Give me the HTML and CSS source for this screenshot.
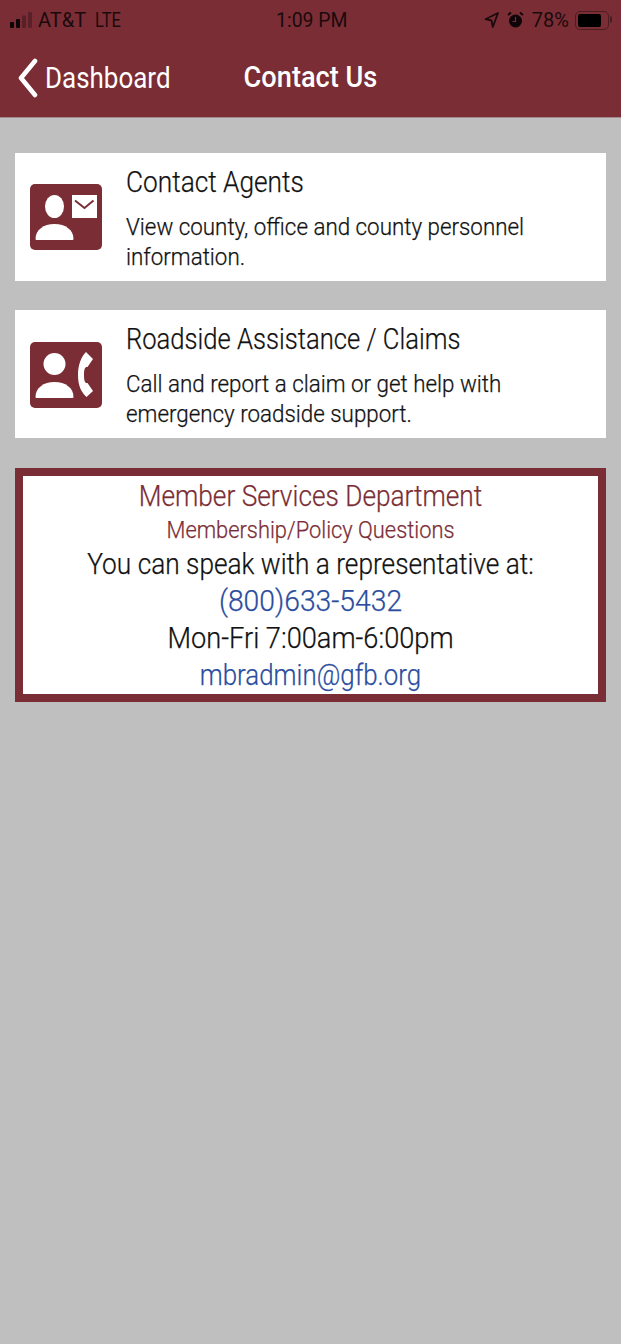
FILE: index.html
```html
<!DOCTYPE html>
<html lang="en">
<head>
<meta charset="utf-8">
<title>Contact Us</title>
<link rel="stylesheet" href="styles.css">
</head>
<body>
<header class="header">
  <div class="status">
    <div class="status-left">
      <svg class="signal" width="24" height="16" viewBox="0 0 24 16"><rect x="1" y="10" width="4" height="6" rx="1" fill="#0d0507"/><rect x="7" y="7" width="4" height="9" rx="1" fill="#0d0507"/><rect x="13" y="3.500" width="4" height="12.500" rx="1" fill="#5a2028"/><rect x="19" y="0" width="4" height="16" rx="1" fill="#5a2028"/></svg>
      <span class="carrier">AT&amp;T</span><span class="lte">LTE</span>
    </div>
    <div class="time">1:09 PM</div>
    <div class="status-right">
      <svg class="arrow" width="15" height="16" viewBox="0 0 15 16"><path d="M14 1 1.500 7.200 7.500 8.500 8.800 15Z" fill="none" stroke="#1a0a0c" stroke-width="1.800" stroke-linejoin="round"/></svg>
      <svg width="17" height="18" viewBox="0 0 17 18"><circle cx="8.500" cy="10" r="6.500" fill="#0d0507"/><path d="M8.500 6v4.500H5.500" fill="none" stroke="#7b2d35" stroke-width="1.200"/><path d="M1 4 4 1.500M16 4l-3-2.500" stroke="#0d0507" stroke-width="1.800"/></svg>
      <span class="pct">78%</span>
      <div class="battery"><div class="battery-fill"></div></div>
    </div>
  </div>
  <nav class="nav">
    <a class="back">
      <svg width="20" height="40" viewBox="0 0 20 40"><path d="M17 3 3 20l14 17" fill="none" stroke="#fff" stroke-width="4.600" stroke-linecap="round" stroke-linejoin="round"/></svg>
      <span class="back-label">Dashboard</span>
    </a>
    <h1 class="title">Contact Us</h1>
  </nav>
</header>
<main class="content">
  <section class="card">
    <svg class="icon" width="72" height="66" viewBox="0 0 72 66">
      <rect width="72" height="66" rx="5" fill="#7b2d35"/>
      <ellipse cx="24.500" cy="22.500" rx="9.500" ry="11.500" fill="#fff"/>
      <path d="M5.500 55c0-9 8-15 19-15s19 6 19 15a1 1 0 0 1-1 1H6.500a1 1 0 0 1-1-1Z" fill="#fff"/>
      <rect x="42" y="11" width="25" height="23" fill="#fff"/>
      <path d="M45 16.500 54.500 24l9-7.500" fill="none" stroke="#7b2d35" stroke-width="2"/>
    </svg>
    <div class="card-text">
      <h2 class="card-title">Contact Agents</h2>
      <p class="card-desc">View county, office and county personnel<br>information.</p>
    </div>
  </section>
  <section class="card">
    <svg class="icon icon-low" width="72" height="66" viewBox="0 0 72 66">
      <rect width="72" height="66" rx="5" fill="#7b2d35"/>
      <circle cx="24.500" cy="22" r="11" fill="#fff"/>
      <path d="M5.500 55c0-9 8-15 19-15s19 6 19 15a1 1 0 0 1-1 1H6.500a1 1 0 0 1-1-1Z" fill="#fff"/>
      <path d="M56 10 63 17 57.500 25C55 24.500 54 27 54 33 54 39 55 41.500 57.500 41L63 49 56.500 55C51 50 48 43 48 33 48 23 51 15 56 10Z" fill="#fff"/>
    </svg>
    <div class="card-text">
      <h2 class="card-title narrow">Roadside Assistance / Claims</h2>
      <p class="card-desc">Call and report a claim or get help with<br>emergency roadside support.</p>
    </div>
  </section>
  <section class="member">
    <h2 class="member-title">Member Services Department</h2>
    <h3 class="member-sub">Membership/Policy Questions</h3>
    <p class="member-line speak">You can speak with a representative at:</p>
    <a class="member-line link phone">(800)633-5432</a>
    <p class="member-line hours">Mon-Fri 7:00am-6:00pm</p>
    <a class="member-line link email">mbradmin@gfb.org</a>
  </section>
</main>
</body>
</html>
```
FILE: styles.css
```css
* { box-sizing: border-box; margin: 0; padding: 0; }
html, body { height: 100%; }
body {
  width: 621px;
  height: 1344px;
  overflow: hidden;
  background: #bfbfbf;
  font-family: Roboto, "Liberation Sans", sans-serif;
  font-weight: 300;
  color: #111;
}
.header {
  height: 118px;
  background: #7b2d35;
  border-bottom: 1px solid #a58a8d;
}
.status {
  height: 40px;
  padding: 0 12px 0 9px;
  display: grid;
  grid-template-columns: 1fr auto 1fr;
  align-items: center;
  color: #1a0a0c;
  font-size: 20px;
  font-weight: 400;
}
.status-left { display: flex; align-items: center; gap: 5px; }
.lte { margin-left: 4px; transform: scaleX(.82); transform-origin: left center; }
.time { transform: translateX(3px) scaleX(.97); }
.status-right { display: flex; align-items: center; justify-content: flex-end; gap: 6px; }
.arrow { margin-right: 2px; }
.pct { margin-left: 2px; }
.battery {
  position: relative;
  width: 34px;
  height: 19px;
  border: 1.500px solid #4c1c22;
  border-radius: 5px;
  padding: 2px;
}
.battery::after {
  content: "";
  position: absolute;
  right: -4px;
  top: 4px;
  width: 2px;
  height: 7px;
  background: #4c1c22;
  border-radius: 0 2px 2px 0;
}
.battery-fill { width: 82%; height: 100%; background: #000; border-radius: 2px; }
.nav {
  height: 77px;
  position: relative;
  display: flex;
  align-items: center;
  padding: 0 0 2px 18px;
  color: #fff;
}
.back { display: flex; align-items: center; gap: 7px; font-size: 29px; font-weight: 400; }
.back-label { transform: scaleX(.895); transform-origin: left center; }
.title {
  position: absolute;
  left: 0;
  right: 0;
  top: 20px;
  text-align: center;
  font-size: 29px;
  font-weight: 500;
  transform: scaleX(.937);
}
.content {
  padding: 35px 15px 0;
  display: flex;
  flex-direction: column;
  gap: 29px;
}
.card {
  height: 128px;
  background: #fff;
  display: flex;
  align-items: center;
  padding: 0 15px;
  gap: 24px;
}
.icon { flex: none; margin-top: -1px; }
.icon-low { margin-top: 1px; }
.card-text {
  align-self: flex-start;
  padding-top: 12px;
  flex: 1;
  -webkit-text-stroke: .25px currentColor;
}
.card-title {
  font-size: 29px;
  font-weight: 300;
  line-height: 34px;
  transform: scaleX(.905);
  transform-origin: left center;
}
.card-title.narrow { transform: scaleX(.883); }
.card-desc {
  font-size: 24px;
  line-height: 30px;
  margin-top: 13px;
  transform: scaleX(.932);
  transform-origin: left center;
}
.member {
  height: 234px;
  margin-top: 1px;
  background: #fff;
  border: 8px solid #7b2d35;
  display: flex;
  flex-direction: column;
  align-items: stretch;
  text-align: center;
  -webkit-text-stroke: .25px currentColor;
}
.member-title {
  font-size: 29px;
  font-weight: 300;
  line-height: 40px;
  color: #7b2d35;
  transform: scaleX(.905);
}
.member-sub {
  font-size: 23.500px;
  font-weight: 300;
  line-height: 28px;
  color: #7b2d35;
  margin-bottom: 2px;
  transform: scaleX(.93);
}
.member-line { display: block; font-size: 29px; line-height: 37px; }
.speak { transform: scaleX(.905); }
.phone { transform: scaleX(.975); }
.hours { transform: scaleX(.938); }
.email { transform: scaleX(.893); }
.link { color: #2a4d9e; }
```
